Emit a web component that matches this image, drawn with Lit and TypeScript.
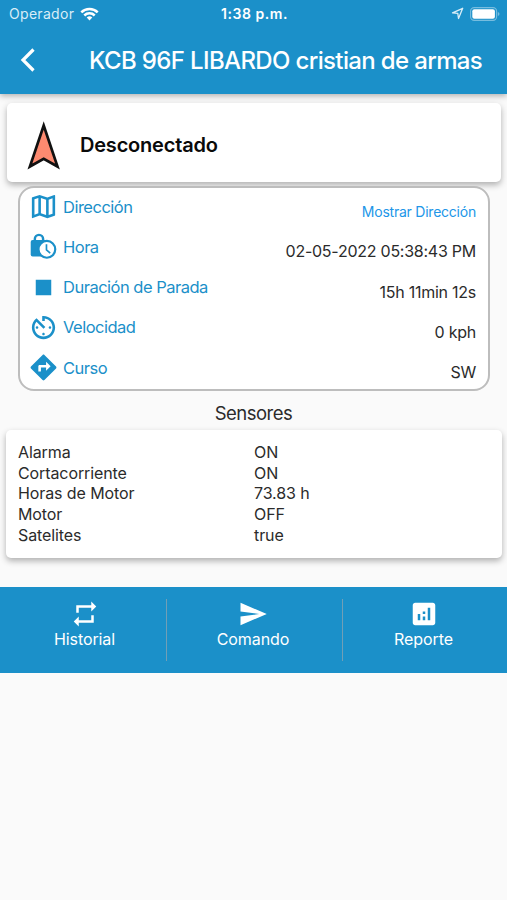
import { LitElement, html, css, svg } from "lit";
import { customElement } from "lit/decorators.js";

const icons: Record<string, unknown> = {
  map: svg`<path d="M20.5 3l-.16.03L15 5.1 9 3 3.36 4.9c-.21.07-.36.25-.36.48V20.500c0 .28.22.5.5.5l.16-.03L9 18.900l6 2.100 5.640-1.900c.21-.07.36-.25.36-.48V3.500c0-.28-.22-.5-.5-.5zM10 5.470l4 1.400v11.660l-4-1.400V5.470zm-5 .99l3-1.010v11.700l-3 1.160V6.460zm14 11.080l-3 1.010V6.860l3-1.160v11.840z"/>`,
  clock: svg`<path d="M3.600 7h10.400v12.700H3.600A1.500 1.500 0 0 1 2.100 18.200V8.500A1.500 1.500 0 0 1 3.600 7z"/><path d="M5.300 7.500V6.200a3.200 3.200 0 0 1 6.400 0v1.300" fill="none" stroke="currentColor" stroke-width="1.900"/><circle cx="14.600" cy="14.200" r="6.500" fill="#fff" stroke="currentColor" stroke-width="1.700"/><path d="M14.300 10.300v4.400l2.900 2.500" fill="none" stroke="currentColor" stroke-width="1.300"/>`,
  stop: svg`<path d="M6 6h12v12H6z"/>`,
  speed: svg`<path d="M11 3v4h2V5.080c3.390.49 6 3.390 6 6.920 0 3.870-3.130 7-7 7s-7-3.130-7-7c0-1.680.59-3.220 1.580-4.420L12 13l1.410-1.410-6.800-6.800v.02C4.420 6.450 3 9.050 3 12c0 4.970 4.020 9 9 9 4.970 0 9-4.030 9-9s-4.030-9-9-9h-1zm7 9c0-.55-.45-1-1-1s-1 .45-1 1 .45 1 1 1 1-.45 1-1zM6 12c0 .55.45 1 1 1s1-.45 1-1-.45-1-1-1-1 .45-1 1zm5 5c0 .55.45 1 1 1s1-.45 1-1-.45-1-1-1-1 .45-1 1z"/>`,
  course: svg`<path d="M21.710 11.290l-9-9c-.39-.39-1.020-.39-1.410 0l-9 9c-.39.39-.39 1.020 0 1.410l9 9c.39.39 1.020.39 1.410 0l9-9c.39-.38.39-1.010 0-1.410zM14 14.500V12h-4v3H8v-4c0-.55.45-1 1-1h5V7.500l3.500 3.500-3.500 3.500z"/>`,
  repeat: svg`<path d="M7 7h10v3l4-4-4-4v3H5v6h2V7zm10 10H7v-3l-4 4 4 4v-3h12v-6h-2v4z"/>`,
  send: svg`<path d="M2.010 21L23 12 2.010 3 2 10l15 2-15 2z"/>`,
  report: svg`<path d="M19 3H5c-1.100 0-2 .9-2 2v14c0 1.100.9 2 2 2h14c1.100 0 2-.9 2-2V5c0-1.100-.9-2-2-2zM9 17H7v-5h2v5zm4 0h-2v-3h2v3zm0-5h-2v-2h2v2zm4 5h-2V7h2v10z"/>`,
};

const icon = (name: string) => html`<svg class="icon" viewBox="0 0 24 24">${icons[name]}</svg>`;

const details = [
  { icon: "map", label: "Dirección", value: "Mostrar Dirección", link: true },
  { icon: "clock", label: "Hora", value: "02-05-2022 05:38:43 PM" },
  { icon: "stop", label: "Duración de Parada", value: "15h 11min 12s" },
  { icon: "speed", label: "Velocidad", value: "0 kph" },
  { icon: "course", label: "Curso", value: "SW" },
];

const sensors = [
  ["Alarma", "ON"],
  ["Cortacorriente", "ON"],
  ["Horas de Motor", "73.83 h"],
  ["Motor", "OFF"],
  ["Satelites", "true"],
];

const actions = [
  { icon: "repeat", label: "Historial" },
  { icon: "send", label: "Comando" },
  { icon: "report", label: "Reporte" },
];

@customElement("app-root")
export class AppRoot extends LitElement {
  static styles = css`
    :host {
      display: flex;
      flex-direction: column;
      box-sizing: border-box;
      height: 900px;
      overflow: hidden;
      background: #fafafa;
      color: #2b2b2b;
      font-family: Inter, "Liberation Sans", sans-serif;
      font-size: 16px;
      white-space: nowrap;
    }
    * { box-sizing: border-box; }
    svg { display: block; flex: none; fill: currentColor; }
    .header {
      flex: none;
      height: 94px;
      background: #1b90c9;
      color: #fff;
      box-shadow: 0 2px 6px rgba(0, 0, 0, 0.3);
    }
    .status {
      display: grid;
      grid-template-columns: 1fr auto 1fr;
      align-items: center;
      height: 27px;
      padding: 0 7px 0 9px;
    }
    .carrier { display: flex; align-items: center; gap: 6px; color: #d9edf7; font-size: 14px; letter-spacing: 0.3px; }
    .carrier svg { color: #fff; }
    .time { font-weight: 600; font-size: 14px; letter-spacing: 0.55px; }
    .power { display: flex; align-items: center; justify-content: flex-end; gap: 6px; }
    .bar { display: flex; align-items: center; height: 67px; padding: 0 0 1px 20px; }
    .title { margin: 0 0 0 53px; font-size: 24px; font-weight: 500; letter-spacing: -0.64px; }
    .state {
      flex: none;
      display: flex;
      align-items: center;
      gap: 19px;
      height: 79px;
      margin: 9px 6px 0 7px;
      padding: 5px 0 0 19px;
      background: #fff;
      border-radius: 5px;
      box-shadow: 0 3px 6px rgba(0, 0, 0, 0.3);
      color: #0a0a0a;
      font-size: 20px;
      font-weight: 600;
      letter-spacing: -0.2px;
    }
    .details {
      flex: none;
      height: 205px;
      margin: 4px 17px 0 18px;
      padding: 0 12px 0 8px;
      background: #fff;
      border: 2px solid #bdbdbd;
      border-radius: 16px;
    }
    .row { display: flex; align-items: flex-start; height: 40.3px; }
    .label {
      display: flex;
      align-items: center;
      gap: 4px;
      height: 37px;
      flex: 1;
      color: #1b90c9;
      font-size: 16.5px;
      letter-spacing: -0.5px;
    }
    .label .icon { width: 31px; height: 31px; }
    .value { line-height: 20px; padding-top: 13px; font-size: 16px; letter-spacing: -0.25px; }
    .value.link { padding-top: 14px; color: #2196e8; font-size: 14px; letter-spacing: -0.23px; }
    .heading {
      margin: 0;
      height: 39px;
      line-height: 44px;
      text-align: center;
      font-size: 18.5px;
      font-weight: 400;
      letter-spacing: -0.5px;
    }
    .sensors {
      flex: none;
      display: grid;
      grid-template-columns: 236px 1fr;
      grid-auto-rows: 20.8px;
      align-items: center;
      height: 128px;
      margin: 0 5px 0 6px;
      padding: 11.400px 12px;
      background: #fff;
      border-radius: 5px;
      box-shadow: 0 3px 6px rgba(0, 0, 0, 0.3);
      letter-spacing: -0.1px;
    }
    .actions {
      flex: none;
      display: grid;
      grid-template-columns: 166px 176px 165px;
      height: 85.500px;
      margin-top: 29px;
      padding: 12px 0;
      background: #1b90c9;
      color: #fff;
    }
    .action {
      display: flex;
      flex-direction: column;
      align-items: center;
      padding-left: 3px;
      font-size: 16px;
      line-height: 20px;
      letter-spacing: -0.1px;
    }
    .action + .action { padding: 0 3px 0 0; border-left: 1px solid #719fb6; }
    .action .icon { width: 30px; height: 30px; }
  `;

  render() {
    return html`
      <header class="header">
        <div class="status">
          <div class="carrier">
            <span>Operador</span>
            <svg width="19" height="14" viewBox="0 0 19 14">
              <g fill="none" stroke="currentColor" stroke-width="2.500">
                <path d="M1.300 5.300a11.600 11.600 0 0 1 16.400 0M4.300 8.500a7.400 7.400 0 0 1 10.400 0" />
              </g>
              <path d="M9.500 13.500l-2.800-2.900a4 4 0 0 1 5.600 0z" />
            </svg>
          </div>
          <span class="time">1:38 p.m.</span>
          <div class="power">
            <svg width="13" height="13" viewBox="0 0 13 13">
              <path d="M1.500 5.900L11.700 1.300 7.500 11.500 6.800 6.300z" fill="none" stroke="#d9edf7" stroke-width="1.300" stroke-linejoin="round" />
            </svg>
            <svg width="30" height="14" viewBox="0 0 30 14">
              <rect x=".6" y=".6" width="26" height="12.800" rx="3.600" fill="none" stroke="#77bddf" stroke-width="1.100" />
              <rect x="2.300" y="2.300" width="22.600" height="9.400" rx="2" />
              <path d="M27.800 5v4q1.700-.6 1.700-2t-1.700-2z" fill="#77bddf" />
            </svg>
          </div>
        </div>
        <div class="bar">
          <svg width="16" height="24" viewBox="0 0 16 24">
            <path d="M13.500 1.500L3 12l10.500 10.500" fill="none" stroke="currentColor" stroke-width="3.200" />
          </svg>
          <h1 class="title">KCB 96F LIBARDO cristian de armas</h1>
        </div>
      </header>
      <section class="state">
        <svg width="35" height="50" viewBox="0 0 35 50">
          <path d="M17.700 5.500L31.500 46.500l-13.800-7.700L3.900 46.500z" fill="#fd8a70" stroke="#111" stroke-width="2.700" />
        </svg>
        <span>Desconectado</span>
      </section>
      <section class="details">
        ${details.map(
          (d) => html`<div class="row">
            <div class="label">${icon(d.icon)}<span>${d.label}</span></div>
            <div class="value ${d.link ? "link" : ""}">${d.value}</div>
          </div>`
        )}
      </section>
      <h2 class="heading">Sensores</h2>
      <section class="sensors">
        ${sensors.map(([name, value]) => html`<span>${name}</span><span>${value}</span>`)}
      </section>
      <nav class="actions">
        ${actions.map((a) => html`<div class="action">${icon(a.icon)}<span>${a.label}</span></div>`)}
      </nav>
    `;
  }
}
